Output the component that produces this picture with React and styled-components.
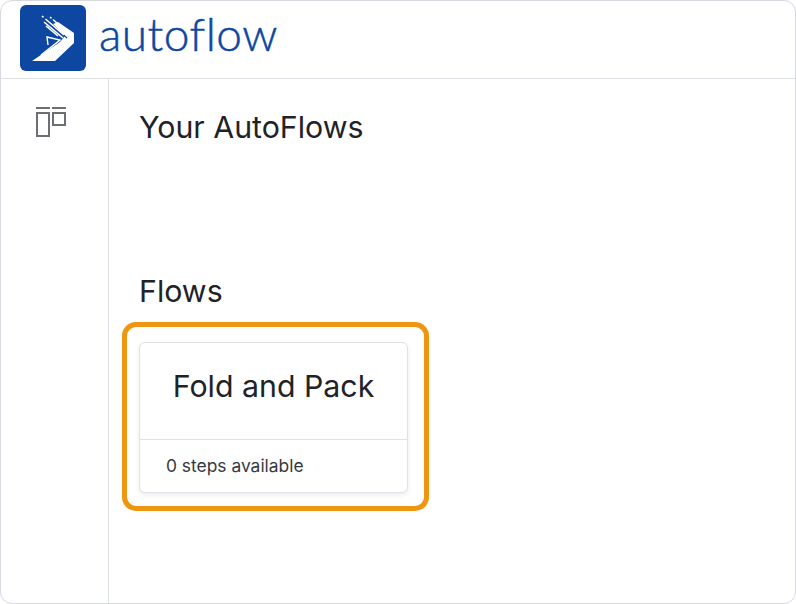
import React from 'react'
import styled, { createGlobalStyle } from 'styled-components'

const GlobalStyle = createGlobalStyle`
  html, body {
    margin: 0;
    padding: 0;
    background: #fff;
  }
  body {
    font-family: Inter, "Liberation Sans", sans-serif;
    color: #1f2328;
  }
`

const Frame = styled.div`
  box-sizing: border-box;
  width: 796px;
  height: 604px;
  border: 1px solid #d8d9de;
  border-radius: 12px;
  display: flex;
  flex-direction: column;
  overflow: hidden;
  background: #fff;
`

const Header = styled.header`
  box-sizing: border-box;
  height: 78px;
  flex: none;
  display: flex;
  align-items: flex-start;
  gap: 13px;
  padding: 4px 0 0 19px;
  border-bottom: 1px solid #dee2e6;
`

const Wordmark = styled.span`
  font-family: Lato, sans-serif;
  font-size: 46px;
  font-weight: 300;
  line-height: 58px;
  letter-spacing: 0.5px;
  color: #0d47a1;
  -webkit-text-stroke: 0.5px #0d47a1;
`

const Body = styled.div`
  flex: 1;
  display: flex;
  min-height: 0;
`

const Sidebar = styled.nav`
  box-sizing: border-box;
  width: 108px;
  flex: none;
  border-right: 1px solid #dee2e6;
  display: flex;
  justify-content: flex-start;
  padding: 28px 0 0 35px;
`

const Main = styled.main`
  flex: 1;
  padding: 29px 0 0 30px;
`

const Heading = styled.h2`
  margin: 0;
  font-size: 30.3px;
  font-weight: 400;
  line-height: 39px;
`

const FlowsHeading = styled(Heading)`
  margin-top: 125px;
`

const Highlight = styled.div`
  box-sizing: border-box;
  width: 307px;
  height: 189px;
  margin: 11px 0 0 -17px;
  padding: 15px 16px 0 12px;
  border: 5px solid #ee9612;
  border-radius: 14px;
`

const Card = styled.article`
  box-sizing: border-box;
  height: 151px;
  border: 1px solid #dee2e6;
  border-radius: 6px;
  background: #fff;
  box-shadow: 0 2px 5px rgba(0, 0, 0, 0.08);
  display: flex;
  flex-direction: column;
`

const CardTitle = styled.div`
  box-sizing: border-box;
  height: 97px;
  flex: none;
  display: flex;
  align-items: center;
  justify-content: center;
  font-size: 30.3px;
  border-bottom: 1px solid #dee2e6;
  padding-bottom: 10px;
`

const CardFooter = styled.div`
  flex: 1;
  display: flex;
  align-items: center;
  padding: 0 0 2px 26px;
  font-size: 17.4px;
  color: #343a40;
`

const Logo = () => (
  <svg width="66" height="66" viewBox="0 0 66 66">
    <rect width="66" height="66" rx="6" fill="#0d47a1" />
    <path d="M12 56 L35 56 L54 38 L54 28 L38 17 L33 19 L45 31 L40 37 Z" fill="#fff" />
    <g stroke="#0d47a1" strokeWidth="1.2" fill="none">
      <path d="M33 21 L47 33" />
    </g>
    <g stroke="#fff" strokeWidth="1.6" fill="none">
      <path d="M22 11 L23.5 12.3 M25.5 14 L44 30" />
      <path d="M24 17 L43 33" />
      <path d="M30 12 L31.5 13.3 M33 14.5 L47 27" />
      <path d="M26 21 L38 31" />
      <path d="M21 50 L40 35 L27 32 L28 40" strokeWidth="1.4" />
    </g>
  </svg>
)

const BoardIcon = () => (
  <svg width="30" height="30" viewBox="0 0 30 30" fill="none" stroke="#6c7075" strokeWidth="2">
    <path d="M0 1H14M16 1H30" />
    <rect x="1" y="6" width="12" height="23" />
    <rect x="17" y="6" width="12" height="12" />
  </svg>
)

const App = () => {
  return (
    <>
      <GlobalStyle />
      <Frame>
        <Header>
          <Logo />
          <Wordmark>autoflow</Wordmark>
        </Header>
        <Body>
          <Sidebar>
            <div><BoardIcon /></div>
          </Sidebar>
          <Main>
            <Heading>Your AutoFlows</Heading>
            <FlowsHeading>Flows</FlowsHeading>
            <Highlight>
              <Card>
                <CardTitle>Fold and Pack</CardTitle>
                <CardFooter>0 steps available</CardFooter>
              </Card>
            </Highlight>
          </Main>
        </Body>
      </Frame>
    </>
  )
}

export default App
